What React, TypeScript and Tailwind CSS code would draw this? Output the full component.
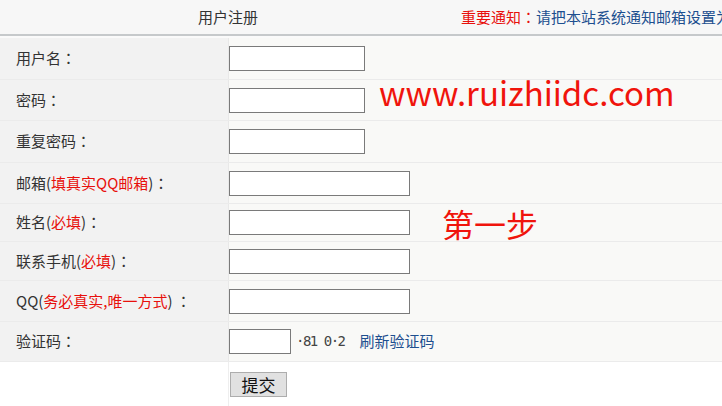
import React from "react";

type Row = { label: React.ReactNode; h: string; input: string; extra?: React.ReactNode };

const red = "text-[#e8100c]";
const Colon = ({ sp }: { sp?: boolean }) => (
  <span className="font-['Noto_Sans_CJK_TC',sans-serif]">{sp ? " ：" : "："}</span>
);

const rows: Row[] = [
  { label: <>用户名<Colon /></>, h: "h-[42px]", input: "w-[136px]" },
  { label: <>密码<Colon /></>, h: "h-[41px]", input: "w-[136px]" },
  { label: <>重复密码<Colon /></>, h: "h-[42px]", input: "w-[136px]" },
  {
    label: (
      <>
        邮箱(<span className={red}>填真实QQ邮箱</span>)<Colon />
      </>
    ),
    h: "h-[41px]",
    input: "w-[181px]",
  },
  {
    label: (
      <>
        姓名(<span className={red}>必填</span>)<Colon />
      </>
    ),
    h: "h-[38px]",
    input: "w-[181px]",
  },
  {
    label: (
      <>
        联系手机(<span className={red}>必填</span>)<Colon />
      </>
    ),
    h: "h-[39px]",
    input: "w-[181px]",
  },
  {
    label: (
      <>
        QQ(<span className={red}>务必真实,唯一方式</span>)<Colon sp />
      </>
    ),
    h: "h-[41px]",
    input: "w-[181px]",
  },
  {
    label: <>验证码<Colon /></>,
    h: "h-[40px]",
    input: "w-[62px]",
    extra: (
      <>
        <span className="ml-[5px] font-['DejaVu_Sans_Mono',monospace] text-[14px] text-[#444] tracking-[-1.5px]">
          ·81 0·2
        </span>
        <a className="ml-[15px] text-[15px] text-[#1d4f8f]">刷新验证码</a>
      </>
    ),
  },
];

export default function App() {
  return (
    <div className="relative w-[722px] h-[406px] overflow-hidden bg-white font-['Noto_Sans_CJK_SC',sans-serif] text-[#333]">
      <div className="flex items-center h-[36px] bg-[#f7f7f7] border-b-2 border-[#c6c9cb] whitespace-nowrap text-[15px] overflow-hidden">
        <div className="w-[456px] shrink-0 text-center">用户注册</div>
        <div className="pl-[5px] shrink-0">
          <span className={red}>重要通知<Colon /></span>
          <span className="text-[#1d4f8f]">请把本站系统通知邮箱设置为白名单，以免收不到邮件</span>
        </div>
      </div>
      <div className="h-[2px] bg-[#fafafa]" />
      {rows.map((r, i) => (
        <div key={i} className={`flex ${r.h} border-b border-[#ebebeb]`}>
          <div className="w-[229px] shrink-0 bg-[#f2f2f2] border-r border-[#e8e8e8] pl-[16px] flex items-center text-[15px] text-[#333] whitespace-pre">
            {r.label}
          </div>
          <div className="flex-1 bg-[#f9f9f7] flex items-center">
            <div className={`${r.input} h-[25px] bg-white border border-[#7a7a7a]`} />
            {r.extra}
          </div>
        </div>
      ))}
      <div className="flex h-[44px]">
        <div className="w-[229px] shrink-0 border-r border-[#eeeeee]" />
        <div className="flex-1 flex items-start pt-[10px]">
          <button className="ml-[1px] w-[57px] h-[25px] bg-[#e1e1e1] border border-[#adadad] text-[17px] leading-none text-[#111]">
            提交
          </button>
        </div>
      </div>
      <div className="absolute left-[379px] top-[76px] text-[33px] leading-none text-[#f0140c] whitespace-nowrap">
        www.ruizhiidc.com
      </div>
      <div className="absolute left-[442px] top-[207px] text-[32px] leading-none text-[#f0140c] whitespace-nowrap">
        第一步
      </div>
    </div>
  );
}
